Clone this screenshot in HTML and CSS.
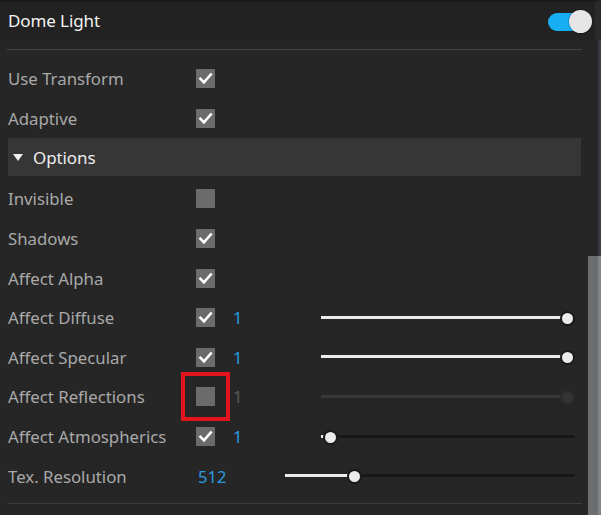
FILE: index.html
```html
<!DOCTYPE html>
<html>
<head>
<meta charset="utf-8">
<link rel="stylesheet" href="styles.css">
</head>
<body>
<div class="window">
  <div class="header">
    <span class="title">Dome Light</span>
    <span class="toggle"><span class="knob"></span></span>
  </div>
  <div class="body">
    <div class="main">
      <div class="sep"></div>
      <div class="rows">
        <div class="row"><span class="label">Use Transform</span><span class="cb on"><svg viewBox="0 0 19 19"><path d="M4.5 9.8 L8 13.3 L14.8 5.5"/></svg></span></div>
        <div class="row"><span class="label">Adaptive</span><span class="cb on"><svg viewBox="0 0 19 19"><path d="M4.5 9.8 L8 13.3 L14.8 5.5"/></svg></span></div>
        <div class="group"><span class="tri"></span><span class="gtitle">Options</span></div>
        <div class="row"><span class="label">Invisible</span><span class="cb"></span></div>
        <div class="row"><span class="label">Shadows</span><span class="cb on"><svg viewBox="0 0 19 19"><path d="M4.5 9.8 L8 13.3 L14.8 5.5"/></svg></span></div>
        <div class="row"><span class="label">Affect Alpha</span><span class="cb on"><svg viewBox="0 0 19 19"><path d="M4.5 9.8 L8 13.3 L14.8 5.5"/></svg></span></div>
        <div class="row"><span class="label">Affect Diffuse</span><span class="cb on"><svg viewBox="0 0 19 19"><path d="M4.5 9.8 L8 13.3 L14.8 5.5"/></svg></span><span class="num">1</span>
          <span class="slider"><span class="track"></span><span class="fill" style="width:246px"></span><span class="thumb" style="left:246px"></span></span></div>
        <div class="row"><span class="label">Affect Specular</span><span class="cb on"><svg viewBox="0 0 19 19"><path d="M4.5 9.8 L8 13.3 L14.8 5.5"/></svg></span><span class="num">1</span>
          <span class="slider"><span class="track"></span><span class="fill" style="width:246px"></span><span class="thumb" style="left:246px"></span></span></div>
        <div class="row"><span class="label">Affect Reflections</span><span class="cb marked"></span><span class="num off">1</span>
          <span class="slider disabled"><span class="track"></span><span class="thumb" style="left:246px"></span></span></div>
        <div class="row"><span class="label">Affect Atmospherics</span><span class="cb on"><svg viewBox="0 0 19 19"><path d="M4.5 9.8 L8 13.3 L14.8 5.5"/></svg></span><span class="num">1</span>
          <span class="slider"><span class="track"></span><span class="fill" style="width:5px"></span><span class="thumb" style="left:9px"></span></span></div>
        <div class="row tex"><span class="label">Tex. Resolution</span><span class="num">512</span>
          <span class="slider wide"><span class="track"></span><span class="fill" style="width:69px"></span><span class="thumb" style="left:69px"></span></span></div>
      </div>
      <div class="sep bottom"></div>
    </div>
    <div class="scrollbar"><div class="sthumb"></div></div>
  </div>
</div>
</body>
</html>
```
FILE: styles.css
```css
html, body {
  margin: 0;
  padding: 0;
  background: #262626;
}
body {
  width: 601px;
  height: 515px;
  overflow: hidden;
  font-family: "Noto Sans", "Open Sans", sans-serif;
}
.window {
  width: 601px;
  height: 515px;
  display: flex;
  flex-direction: column;
}
.header {
  box-sizing: border-box;
  height: 40px;
  border-top: 2px solid #1b1b1b;
  border-right: 6px solid #2a2a2a;
  background: #222222;
  display: flex;
  align-items: center;
  justify-content: space-between;
  padding: 0 11px 0 8px;
  flex-shrink: 0;
}
.title {
  color: #f2f2f2;
  font-size: 17px;
  letter-spacing: -0.1px;
  margin-top: -1px;
}
.toggle {
  position: relative;
  width: 36px;
  height: 18px;
  border-radius: 9px;
  background: #18aef4;
  margin-top: 1px;
}
.knob {
  position: absolute;
  left: 21px;
  top: -3px;
  width: 23px;
  height: 23px;
  border-radius: 50%;
  background: #e6e6e6;
  box-shadow: 0 0 2px rgba(0,0,0,0.6);
}
.body {
  flex: 1;
  display: flex;
  min-height: 0;
}
.main {
  width: 588px;
  display: flex;
  flex-direction: column;
}
.sep {
  height: 1px;
  background: #444444;
  margin: 9px 6px 0 7px;
}
.sep.bottom {
  margin-top: 7px;
  background: #3c3c3c;
}
.rows {
  margin-top: 9px;
  display: flex;
  flex-direction: column;
}
.row {
  height: 39.6px;
  display: flex;
  align-items: center;
  padding-left: 8px;
}
.label {
  width: 188px;
  flex-shrink: 0;
  color: #a9a9a9;
  font-size: 16.8px;
  letter-spacing: 0;
  white-space: nowrap;
}
.row.tex .label {
  width: 190px;
}
.cb {
  width: 19px;
  height: 19px;
  background: #6b6b6b;
  flex-shrink: 0;
  position: relative;
}
.cb svg {
  display: block;
  width: 19px;
  height: 19px;
}
.cb svg path {
  fill: none;
  stroke: #ffffff;
  stroke-width: 2.6;
  stroke-linecap: square;
}
.cb.marked {
  outline: 4px solid #e3141b;
  outline-offset: 11px;
}
.num {
  width: 86px;
  margin-left: 18px;
  flex-shrink: 0;
  color: #2b9be0;
  font-size: 16.5px;
}
.num.off {
  color: #5a5a5a;
}
.row.tex .num {
  margin-left: 0;
  width: 87px;
}
.slider {
  position: relative;
  width: 254px;
  height: 16px;
  flex-shrink: 0;
  margin-left: 2px;
}
.row.tex .slider {
  margin-left: 0;
}
.slider.wide {
  width: 290px;
}
.track {
  position: absolute;
  left: 0;
  right: 0;
  top: 6px;
  height: 3px;
  background: #171717;
}
.fill {
  position: absolute;
  left: 0;
  top: 6px;
  height: 3px;
  background: #ececec;
}
.thumb {
  position: absolute;
  top: 1px;
  width: 11px;
  height: 11px;
  margin-left: -7px;
  border-radius: 50%;
  background: #ececec;
  border: 2px solid #1a1a1a;
}
.slider.disabled .track {
  background: #383838;
}
.slider.disabled .thumb {
  background: #333333;
  border-color: #2b2b2b;
}
.group {
  height: 38px;
  margin: 0 7px 3px 8px;
  background: #363636;
  display: flex;
  align-items: center;
}
.tri {
  width: 0;
  height: 0;
  border-left: 5px solid transparent;
  border-right: 5px solid transparent;
  border-top: 7px solid #f0f0f0;
  margin-left: 5px;
  margin-right: 10px;
}
.gtitle {
  color: #ececec;
  font-size: 17px;
  letter-spacing: -0.1px;
}
.scrollbar {
  box-sizing: border-box;
  width: 13px;
  background: #262626;
  border-right: 3px solid #363c42;
  display: flex;
  flex-direction: column;
  justify-content: flex-end;
}
.sthumb {
  height: 259px;
  margin-right: -3px;
  background: #6b6d6e;
  border-right: 3px solid #7d858b;
}
```
